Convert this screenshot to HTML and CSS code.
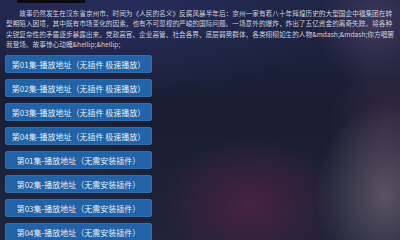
FILE: index.html
```html
<!DOCTYPE html>
<html lang="zh-CN">
<head>
    <meta charset="UTF-8">
    <meta name="viewport" content="width=device-width, initial-scale=1.0">
    <title>突围 - 播放地址</title>
    <link rel="stylesheet" href="styles.css">
</head>
<body>

    <!-- Cover strip -->
    <div class="cover"></div>

    <!-- Synopsis -->
    <p class="intro">故事仍然发生在汉东省京州市，时间为《人民的名义》反腐风暴半年后：京州一家有着八十年辉煌历史的大型国企中福集团在转型期陷入困境，其中既有市场变化的因素，也有不可忽视的严峻的国际问题。一场意外的爆炸，炸出了五亿资金的离奇失踪。将各种尖锐复杂性的矛盾逐步暴露出来。党政高官、企业高管、社会各界、底层弱势群体，各类栩栩如生的人物&amp;mdash;&amp;mdash;你方唱罢我登场。故事惊心动魄&amp;hellip;&amp;hellip;</p>

    <!-- Episode list -->
    <div class="episodes">
        <a class="ep-btn" href="#">第01集-播放地址（无插件 极速播放）</a>
        <a class="ep-btn" href="#">第02集-播放地址（无插件 极速播放）</a>
        <a class="ep-btn" href="#">第03集-播放地址（无插件 极速播放）</a>
        <a class="ep-btn" href="#">第04集-播放地址（无插件 极速播放）</a>
        <a class="ep-btn" href="#">第01集-播放地址（无需安装插件）</a>
        <a class="ep-btn" href="#">第02集-播放地址（无需安装插件）</a>
        <a class="ep-btn" href="#">第03集-播放地址（无需安装插件）</a>
        <a class="ep-btn" href="#">第04集-播放地址（无需安装插件）</a>
    </div>

</body>
</html>
```

FILE: styles.css
```css
html, body {
    height: 100%;
}

body {
    margin: 0;
    padding: 0;
    overflow: hidden;
    font-family: "Noto Sans CJK SC", "Noto Sans", sans-serif;
    color: #ccd0dc;
    background-color: #1b2038;
    background-image:
        radial-gradient(ellipse 70px 90px at 385px 195px, rgba(110, 100, 115, 0.75), rgba(110, 100, 115, 0) 100%),
        radial-gradient(ellipse 90px 70px at 250px 205px, rgba(85, 35, 70, 0.75), rgba(85, 35, 70, 0) 100%),
        radial-gradient(ellipse 60px 60px at 375px 25px, rgba(90, 70, 110, 0.6), rgba(90, 70, 110, 0) 100%),
        radial-gradient(ellipse 60px 70px at 390px 120px, rgba(80, 50, 80, 0.5), rgba(80, 50, 80, 0) 100%),
        radial-gradient(ellipse 220px 90px at 120px 10px, rgba(40, 46, 95, 0.85), rgba(40, 46, 95, 0) 100%),
        radial-gradient(ellipse 110px 120px at 60px 200px, rgba(30, 45, 75, 0.6), rgba(30, 45, 75, 0) 100%),
        linear-gradient(180deg, #1e2444 0%, #191d33 45%, #1f2238 100%);
}

/* Cover strip */
.cover {
    width: 68px;
    height: 3px;
    margin-left: 17px;
    background: #0c0c10;
}

/* Synopsis */
.intro {
    margin: 5px 0 0;
    padding: 0 5px 0 6px;
    font-size: 6.67px;
    line-height: 10.3px;
    text-indent: 2em;
}

/* Episode buttons */
.episodes {
    display: flex;
    flex-direction: column;
    gap: 6px;
    width: 147px;
    margin: 6px 0 0 5px;
}

.ep-btn {
    display: flex;
    align-items: center;
    justify-content: center;
    height: 18px;
    box-sizing: border-box;
    background: #2262a6;
    border: 1px solid #2c6fb3;
    border-radius: 2px;
    color: #e6edf7;
    font-size: 8px;
    text-decoration: none;
    white-space: nowrap;
}
```
